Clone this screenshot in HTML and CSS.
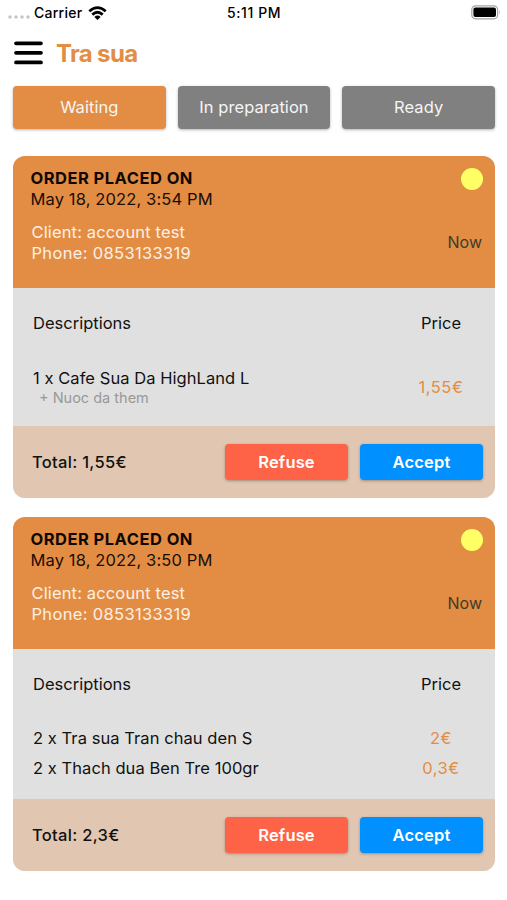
FILE: index.html
```html
<!DOCTYPE html>
<html lang="en">
<head>
<meta charset="utf-8">
<title>Tra sua</title>
<link rel="stylesheet" href="styles.css">
</head>
<body>
<div class="statusbar">
  <div class="carrier">
    <svg class="dots" width="22" height="4" viewBox="0 0 22 4" fill="#c4c4c4"><circle cx="2" cy="2" r="1.7"/><circle cx="8" cy="2" r="1.7"/><circle cx="14" cy="2" r="1.7"/><circle cx="20" cy="2" r="1.7"/></svg>
    <span class="carrier-name">Carrier</span>
    <svg class="wifi" width="19" height="14" viewBox="0 0 19 14" fill="none" stroke="#000" stroke-width="2.8"><path d="M1.3 5.2Q9.5 -1.9 17.7 5.2"/><path d="M4.3 8.6Q9.5 4 14.7 8.6"/><path d="M9.5 14L6.4 10.9Q9.5 8.3 12.6 10.9Z" fill="#000" stroke="none"/></svg>
  </div>
  <time class="clock">5:11 PM</time>
  <svg class="battery" width="30" height="15" viewBox="0 0 30 15"><rect x="0.8" y="0.8" width="25.8" height="13" rx="3.8" fill="none" stroke="#a3a3a3" stroke-width="1.2"/><rect x="2.4" y="2.5" width="22.6" height="9.6" rx="2" fill="#000"/><path d="M28.1 5.2Q29.9 7.3 28.1 9.4Z" fill="#999"/></svg>
</div>
<header class="topbar">
  <svg class="menu" width="30" height="24" viewBox="0 0 30 24" stroke="#000" stroke-width="3.7" stroke-linecap="round"><path d="M2 2.3H27M2 11.8H27M2 21.4H27"/></svg>
  <h1>Tra sua</h1>
</header>
<nav class="tabs">
  <button class="tab active">Waiting</button>
  <button class="tab">In preparation</button>
  <button class="tab">Ready</button>
</nav>
<main>
  <article class="card">
    <section class="head">
      <div class="info">
        <h2>ORDER PLACED ON</h2>
        <p class="date">May 18, 2022, 3:54 PM</p>
        <p class="client">Client: account test</p>
        <p class="client phone">Phone: 0853133319</p>
      </div>
      <div class="state"><i class="dot"></i><span class="now">Now</span></div>
    </section>
    <section class="body">
      <div class="row titles"><span class="label">Descriptions</span><span class="price-title">Price</span></div>
      <div class="row tall">
        <div class="item"><p class="name">1 x Cafe Sua Da HighLand L</p><p class="extra">+ Nuoc da them</p></div>
        <span class="price">1,55€</span>
      </div>
    </section>
    <footer class="foot">
      <strong class="total">Total: 1,55€</strong>
      <button class="action refuse">Refuse</button>
      <button class="action accept">Accept</button>
    </footer>
  </article>
  <article class="card">
    <section class="head">
      <div class="info">
        <h2>ORDER PLACED ON</h2>
        <p class="date">May 18, 2022, 3:50 PM</p>
        <p class="client">Client: account test</p>
        <p class="client phone">Phone: 0853133319</p>
      </div>
      <div class="state"><i class="dot"></i><span class="now">Now</span></div>
    </section>
    <section class="body two">
      <div class="row titles"><span class="label">Descriptions</span><span class="price-title">Price</span></div>
      <div class="row"><p class="name">2 x Tra sua Tran chau den S</p><span class="price">2€</span></div>
      <div class="row"><p class="name">2 x Thach dua Ben Tre 100gr</p><span class="price">0,3€</span></div>
    </section>
    <footer class="foot">
      <strong class="total">Total: 2,3€</strong>
      <button class="action refuse">Refuse</button>
      <button class="action accept">Accept</button>
    </footer>
  </article>
</main>
</body>
</html>
```
FILE: styles.css
```css
* { box-sizing: border-box; margin: 0; padding: 0; }
body { width: 507px; height: 900px; overflow: hidden; background: #fff; color: #111; font-family: Inter, "Liberation Sans", sans-serif; font-size: 16.5px; line-height: 21px; white-space: nowrap; }
svg { display: block; }

.statusbar { display: grid; grid-template-columns: 1fr auto 1fr; align-items: center; height: 26px; padding: 0 7px 0 8px; font-size: 14px; line-height: 20px; font-weight: 500; color: #000; }
.carrier { display: flex; align-items: center; margin-top: -1px; }
.dots { margin-top: 8px; }
.carrier-name { margin: 0 6px 0 4px; letter-spacing: 0.25px; }
.clock { margin-top: -1px; letter-spacing: 0.6px; }
.battery { justify-self: end; margin: -1px -1px 0 0; }

.topbar { display: flex; align-items: center; height: 54px; padding: 0 0 0 13.5px; }
h1 { margin: 2px 0 0 12.5px; color: #e38d44; font-size: 24px; line-height: 30px; font-weight: 700; letter-spacing: -0.65px; }

.tabs { display: grid; grid-template-columns: repeat(3, 1fr); gap: 12px; height: 49px; padding: 6px 12px 0 13px; }
button { border: 0; border-radius: 4px; color: #fff; font: inherit; box-shadow: 0 1px 3px rgba(0, 0, 0, .3); }
.tab { background: #808080; color: #f5f5f5; letter-spacing: 0.06px; }
.tab.active { background: #e38d44; }

main { display: flex; flex-direction: column; gap: 19px; padding: 27px 12px 0 13px; }
.card { border-radius: 12px; overflow: hidden; background: #e0e0e0; }
.head { display: flex; justify-content: space-between; height: 132px; padding: 12px 12px 0 17.5px; background: #e38d44; }
h2 { font-size: 16.5px; line-height: 21px; font-weight: 700; letter-spacing: 0.48px; color: #100800; }
.date { letter-spacing: 0.13px; color: #1a0e04; }
.client { margin: 12px 0 0 1px; letter-spacing: 0.14px; color: #fdf0e4; }
.client.phone { margin-top: 0; letter-spacing: 0.33px; }
.state { display: flex; flex-direction: column; align-items: flex-end; justify-content: space-between; height: 85px; }
.dot { width: 22px; height: 22px; margin-right: 0.5px; border-radius: 50%; background: #ffff66; }
.now { margin-right: 1px; font-size: 16px; color: #3d3c2c; }

.body { height: 138px; padding: 20px 0 0 20px; }
.body.two { height: 150px; }
.row { display: grid; grid-template-columns: 1fr 108px; align-items: center; height: 29.5px; }
.row.titles { height: 30px; margin-bottom: 25px; }
.row.tall { height: 48px; }
.name { letter-spacing: 0.06px; }
.price, .price-title { text-align: center; }
.price { color: #e38d44; letter-spacing: 0.5px; }
.extra { margin-left: 6px; color: #989898; font-size: 14.5px; line-height: 18px; }

.foot { display: flex; align-items: center; gap: 12px; height: 72px; padding: 0 12px 0 19px; background: #e1c7b2; }
.total { flex: 1; font-weight: 500; letter-spacing: 0.3px; }
.action { width: 123px; height: 36px; font-weight: 600; letter-spacing: 0.15px; }
.refuse { background: #ff6347; }
.accept { background: #0090ff; }
```
